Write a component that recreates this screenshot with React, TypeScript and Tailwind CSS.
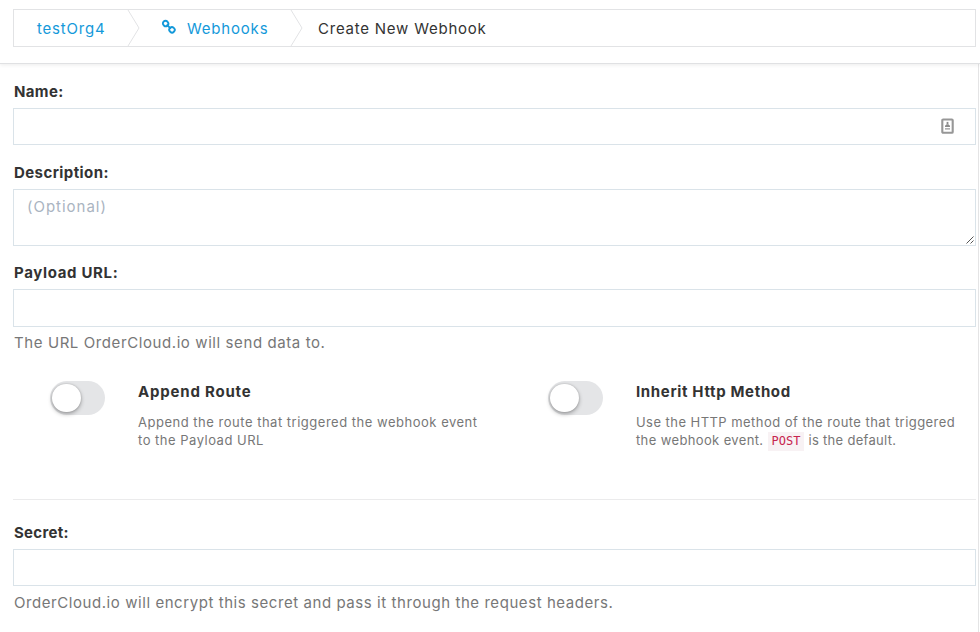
import type { ReactNode } from "react";

function Label({ children, className = "" }: { children: ReactNode; className?: string }) {
  return (
    <div className={`flex h-5 items-center whitespace-nowrap text-[15px] font-bold text-[#333333] ${className}`}>
      <span>{children}</span>
    </div>
  );
}

function Separator() {
  return (
    <svg width="13" height="36" viewBox="0 0 13 36" fill="none" stroke="#e2e3e5" strokeWidth="1" className="shrink-0">
      <path d="M1 0L12 18L1 36" />
    </svg>
  );
}

function ChainIcon() {
  return (
    <svg width="16" height="16" viewBox="0 0 16 16" fill="none" stroke="#1499da" strokeWidth="1.9" strokeLinecap="round" className="shrink-0">
      <rect x="1.9" y="1.9" width="5.4" height="5.2" rx="2.5" transform="rotate(45 4.6 4.5)" />
      <rect x="8.3" y="8.2" width="5.4" height="5.2" rx="2.5" transform="rotate(45 11 10.8)" />
      <path d="M6.3 6.2L9.3 9.1" />
    </svg>
  );
}

function ContactIcon() {
  return (
    <svg width="14" height="18" viewBox="0 0 14 18" className="-mt-px shrink-0">
      <rect x="2.3" y="2.5" width="10.4" height="13.2" rx="0.8" fill="#fff" stroke="#979797" strokeWidth="2.1" />
      <rect x="6.6" y="4.9" width="1.8" height="2.6" fill="#8b8b8b" />
      <path d="M5 9.9V8.7L6.4 7.4H8.6L10 8.7V9.9Z" fill="#8b8b8b" />
      <rect x="5" y="11.1" width="5" height="1.5" fill="#a8a8a8" />
    </svg>
  );
}

function Toggle() {
  return (
    <div className="mt-px flex h-[34px] w-[55px] shrink-0 items-center rounded-full bg-[#e4e5e7] pl-[2px]">
      <div className="-mt-px h-[28px] w-[29px] rounded-full bg-white shadow-[0_2px_4px_rgba(0,0,0,0.3),0_0_2px_rgba(0,0,0,0.2)]" />
    </div>
  );
}

export default function App() {
  return (
    <div className="flex h-[632px] w-[980px] flex-col overflow-hidden bg-white font-['Inter',sans-serif] text-[15px]">
      <header className="relative h-16 shrink-0 border-b border-[#e0e1e3] bg-white pl-[13px] pt-[9px] shadow-[0_1px_4px_rgba(0,0,0,0.08)]">
        <nav className="flex h-[38px] w-[963px] items-center whitespace-nowrap border border-[#e2e3e5]">
          <a className="ml-[23px] mt-[2px] w-[90px] text-[#1499da]"><span className="tracking-[0.8px]">testOrg4</span></a>
          <Separator />
          <div className="-mt-[3px] ml-[21px] w-[26px]"><ChainIcon /></div>
          <a className="mt-[2px] w-[103px] text-[#1499da]"><span className="tracking-[0.8px]">Webhooks</span></a>
          <Separator />
          <div className="ml-[15px] mt-[2px] text-[#333333]"><span className="tracking-[0.77px]">Create New Webhook</span></div>
        </nav>
      </header>
      <main className="w-[979px] flex-1 border-r border-[#e4e4e5] pl-[13px] pt-[18px]">
        <Label className="pl-px tracking-[0.35px]">Name:</Label>
        <div className="mt-[6px] flex h-[37px] w-[963px] items-center justify-end border border-[#dae3e9] pr-[21px]"><ContactIcon /></div>
        <Label className="mt-[18px] pl-px tracking-[0.42px]">Description:</Label>
        <div className="mt-[6px] flex h-[57px] w-[963px] items-start justify-between border border-[#dae3e9] pl-[13px] pt-[7px]">
          <span className="leading-5 tracking-[0.98px] text-[#aab4c1]">(Optional)</span>
          <svg width="10" height="10" viewBox="0 0 10 10" className="mt-[38px]" stroke="#555" strokeWidth="1" fill="none"><path d="M1.5 8.5L8.5 1.5M5.5 8.5L8.5 5.5" /></svg>
        </div>
        <Label className="mt-[17px] pl-px tracking-[0.65px]">Payload URL:</Label>
        <div className="mt-[6px] h-[38px] w-[963px] border border-[#dae3e9]" />
        <p className="mt-[6px] h-5 whitespace-nowrap pl-px leading-5 text-[#777777]"><span className="tracking-[0.59px]">The URL OrderCloud.io will send data to.</span></p>
        <section className="mt-[27px] flex h-[120px] w-[963px] border-b border-[#ebebec] pl-[37px]">
          <div className="flex w-[498px]">
            <Toggle />
            <div className="ml-[33px]">
              <Label className="mt-[2px] tracking-[0.8px]">Append Route</Label>
              <p className="mt-[11px] whitespace-nowrap text-[13px] leading-[18px] text-[#777777]">
                <span className="tracking-[0.51px]">Append the route that triggered the webhook event</span><br /><span className="tracking-[0.5px]">to the Payload URL</span>
              </p>
            </div>
          </div>
          <div className="flex">
            <Toggle />
            <div className="ml-[33px]">
              <Label className="mt-[2px] tracking-[0.65px]">Inherit Http Method</Label>
              <p className="mt-[11px] whitespace-nowrap text-[13px] leading-[18px] text-[#777777]">
                <span className="tracking-[0.45px]">Use the HTTP method of the route that triggered</span><br />
                <span className="tracking-[0.37px]">the webhook event.</span>
                <code className="ml-[5px] mr-[4px] inline-block h-[19px] w-[36px] bg-[#f8f2f4] px-[3px] align-middle font-['DejaVu_Sans_Mono',monospace] text-[12px] leading-[18px] text-[#c7254e]">POST</code>
                <span className="tracking-[0.3px]">is the default.</span>
              </p>
            </div>
          </div>
        </section>
        <Label className="mt-[23px] pl-px tracking-[0.3px]">Secret:</Label>
        <div className="mt-[6px] h-[37px] w-[963px] border border-[#dae3e9]" />
        <p className="mt-[7px] h-5 whitespace-nowrap pl-px leading-5 text-[#777777]"><span className="tracking-[0.565px]">OrderCloud.io will encrypt this secret and pass it through the request headers.</span></p>
      </main>
    </div>
  );
}
